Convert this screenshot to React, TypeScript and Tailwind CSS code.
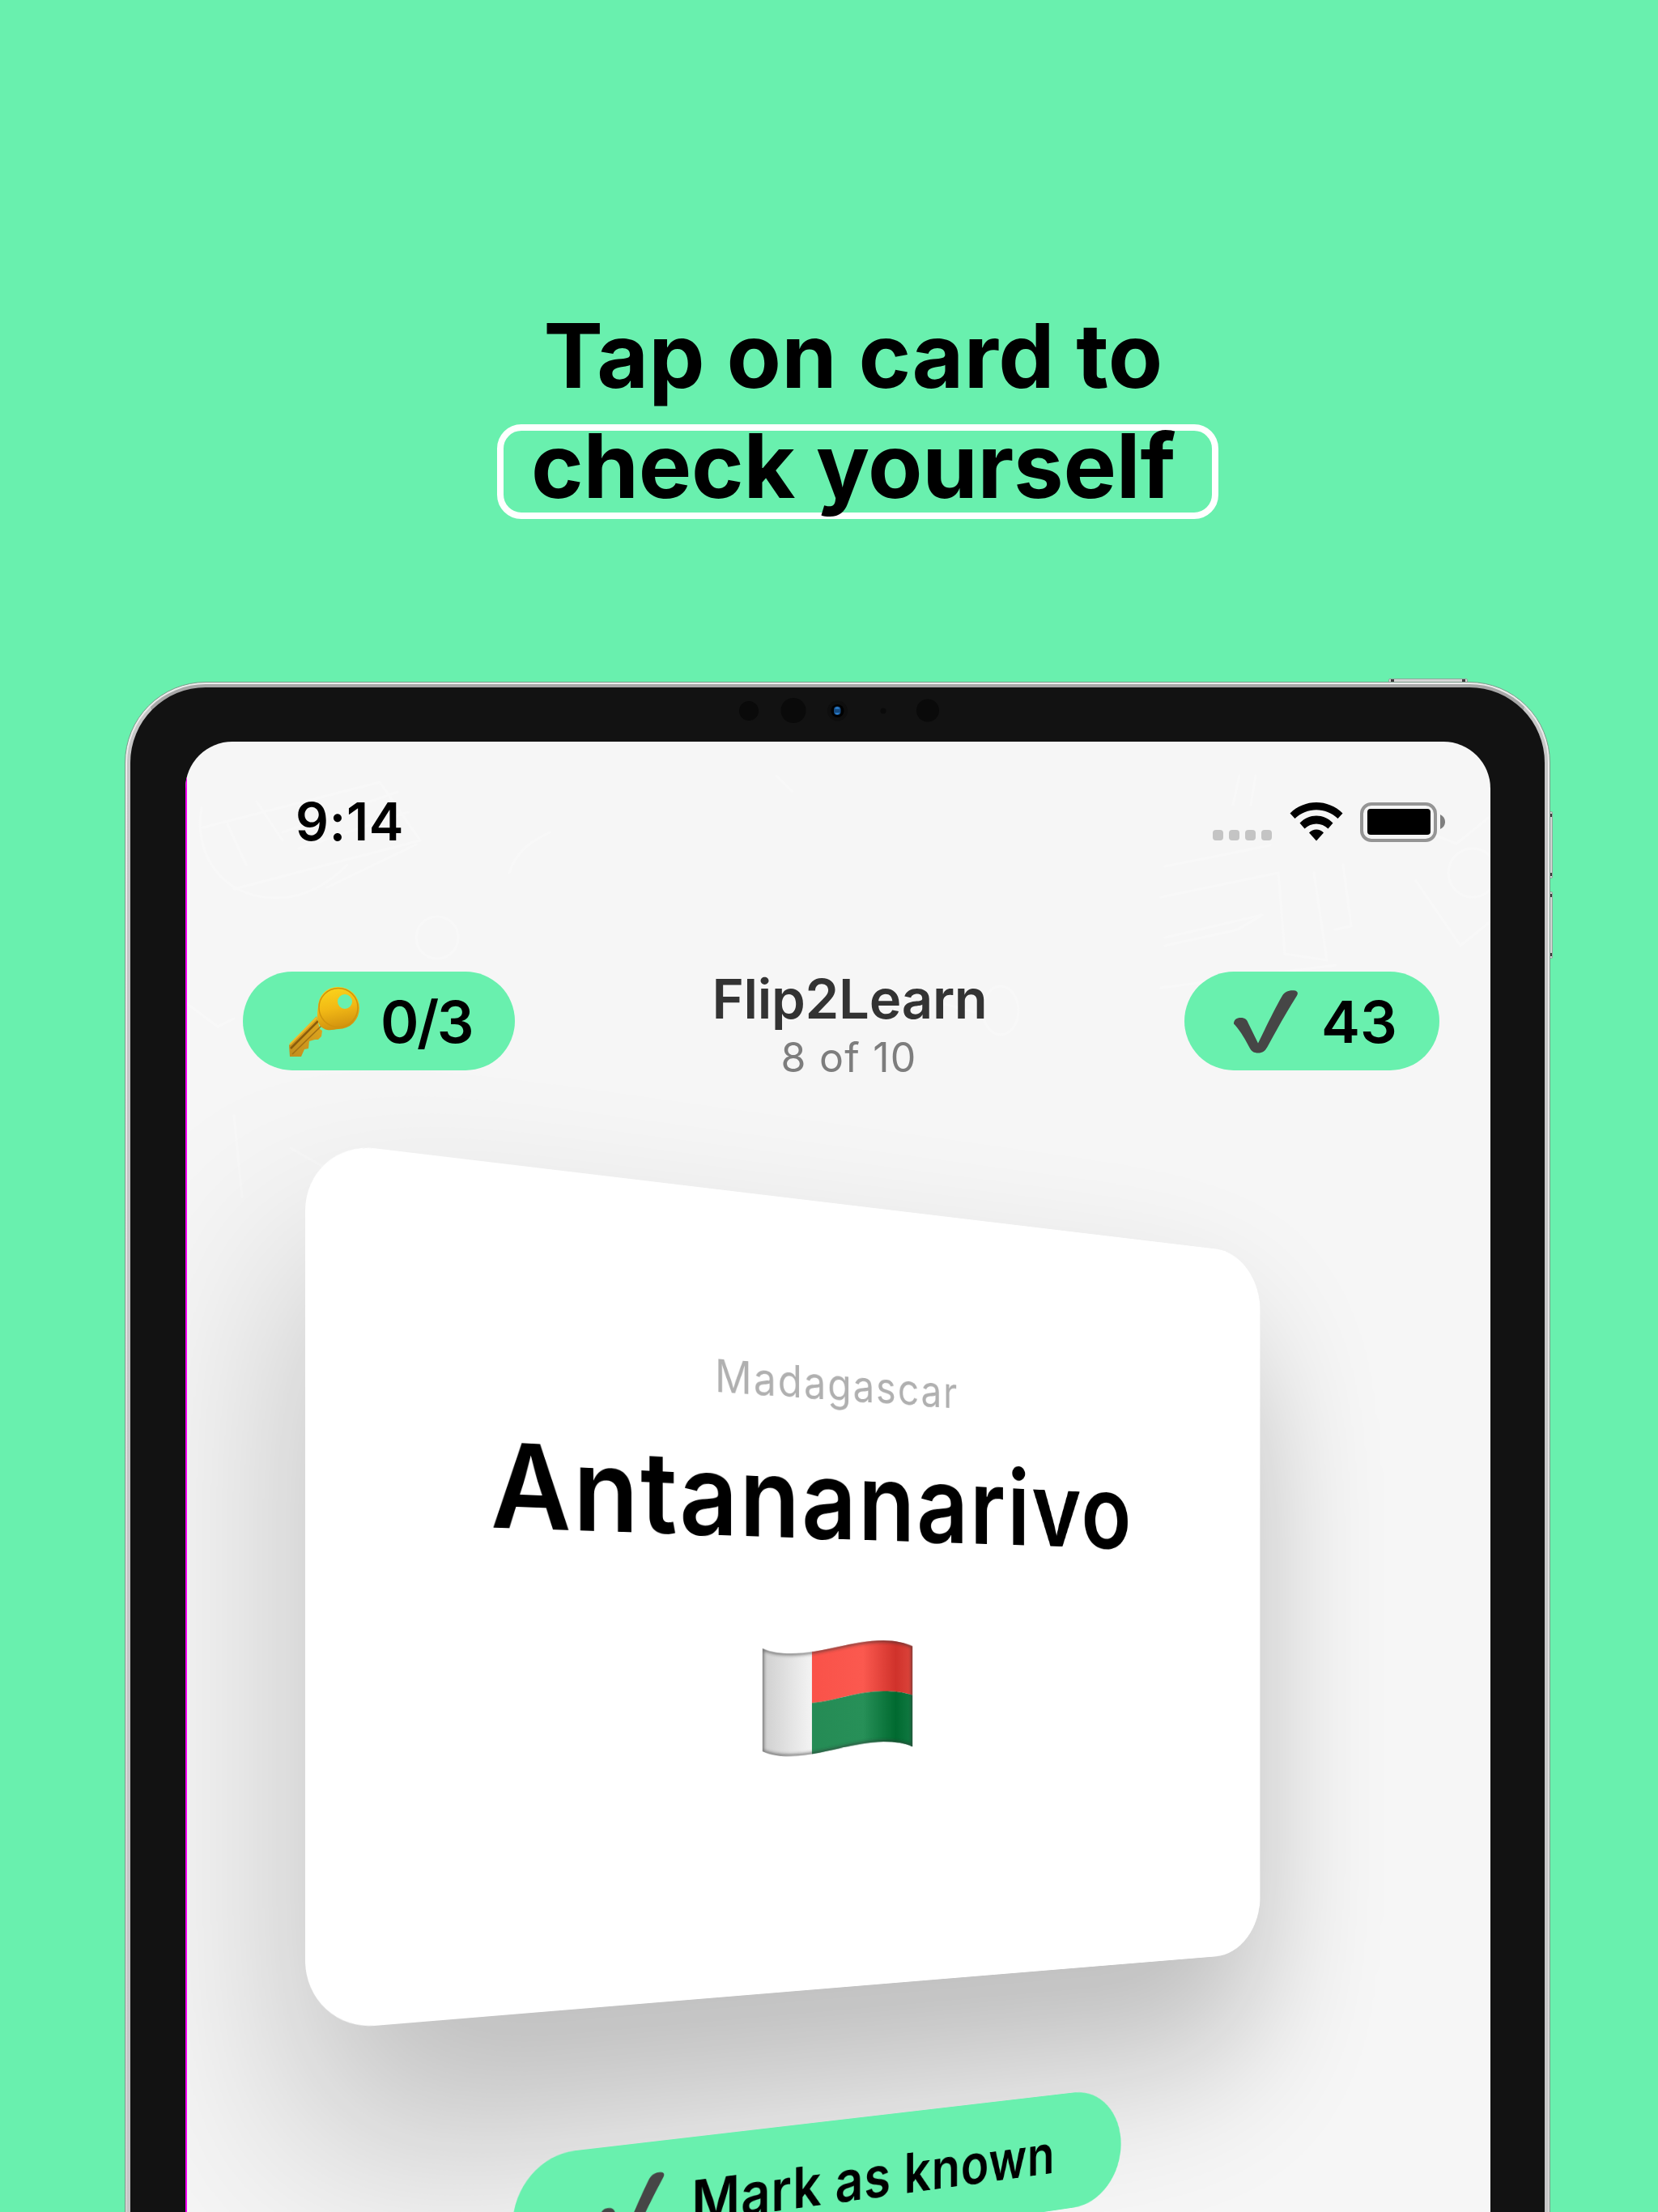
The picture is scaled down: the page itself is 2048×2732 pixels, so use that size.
import React from "react";

function CheckMark({ className }: { className: string }) {
  return (
    <svg viewBox="0 0 79 78" className={className} fill="#464646">
      <path d="M0 41.5C-.3 37 3 34 8.500 34c5.500 0 8 2.500 9.500 7l12 24.500C39 47 50 24 59.500 7.500 62.500 2 67.500-.2 74 .2c5 .3 6 3.300 3.800 6.800C65 27 53 49 41.500 70c-3 5.300-6 7.500-11.500 7.500-5 0-8.300-2-10.500-6.500C11 54.500 4 45.500 0 41.500Z" />
    </svg>
  );
}

function KeyIcon() {
  return (
    <svg viewBox="0 0 87 87" className="h-[87px] w-[87px]">
      <defs>
        <linearGradient id="keyGold" x1="0" y1="0" x2="0.2" y2="1">
          <stop offset="0" stopColor="#fbd81c" />
          <stop offset="0.55" stopColor="#f2b915" />
          <stop offset="1" stopColor="#d2930f" />
        </linearGradient>
        <linearGradient id="shaftGold" x1="1" y1="0" x2="0" y2="1">
          <stop offset="0" stopColor="#e0a81c" />
          <stop offset="1" stopColor="#c18d1f" />
        </linearGradient>
      </defs>
      <path d="M34 36 38 52 41 54 40 61 36 65 32 65 25 67 24 76 19 77 15 86 1 86 0 72Z" fill="url(#shaftGold)" />
      <path d="M36 42 2 76" stroke="#8a5d0c" strokeWidth="2.500" />
      <path d="M34 38 1 71" stroke="#efbd2a" strokeWidth="2" />
      <path d="M41 47 4 83" stroke="#a07014" strokeWidth="1.500" />
      <path fillRule="evenodd" d="M61 0a26 26 0 0 1 0 52c-4 0-9 2-14 1-8-2-12-8-12-16 0-4 0-8 1-13C37 10 46 0 61 0Zm8 9a9 9 0 1 0 0 18 9 9 0 0 0 0-18Z" fill="url(#keyGold)" />
      <circle cx="61" cy="25.500" r="24" fill="none" stroke="#cf930c" strokeWidth="1.500" />
    </svg>
  );
}

const flagOutline =
  "M0 13C14 19 28 20 43 20 95 20 140 1 192 1 212 1 228 4 240 9V152.500C228 148 212 145 192 145 140 145 95 162.500 43 162.500 28 162.500 14 161 0 155Z";

function Flag() {
  return (
    <svg viewBox="0 0 240 166" className="h-[166px] w-[240px]">
      <defs>
        <clipPath id="wave">
          <path d={flagOutline} />
        </clipPath>
        <linearGradient id="w" x1="0" x2="1">
          <stop offset="0" stopColor="#cfcfcf" />
          <stop offset="0.3" stopColor="#dadada" />
          <stop offset="1" stopColor="#f4f4f4" />
        </linearGradient>
        <linearGradient id="r" x1="0" x2="1">
          <stop offset="0" stopColor="#fa5249" />
          <stop offset="0.5" stopColor="#fb594f" />
          <stop offset="0.83" stopColor="#d0322b" />
          <stop offset="1" stopColor="#dc453c" />
        </linearGradient>
        <linearGradient id="g" x1="0" x2="1">
          <stop offset="0" stopColor="#258b55" />
          <stop offset="0.5" stopColor="#279058" />
          <stop offset="0.83" stopColor="#006a30" />
          <stop offset="1" stopColor="#127a43" />
        </linearGradient>
        <filter id="soft"><feGaussianBlur stdDeviation="2" /></filter>
      </defs>
      <g clipPath="url(#wave)">
        <rect width="78" height="166" fill="url(#w)" />
        <path d="M77 0H240V79C226 75 210 73 192 73 150 73 115 86 77 89Z" fill="url(#r)" />
        <path d="M77 89C115 86 150 73 192 73 210 73 226 75 240 79V166H77Z" fill="url(#g)" />
        <path d={flagOutline} fill="none" stroke="#333" strokeOpacity="0.6" strokeWidth="5" filter="url(#soft)" />
      </g>
    </svg>
  );
}

function Doodles() {
  return (
    <svg viewBox="0 0 1612 1816" className="absolute inset-0 h-full w-full" fill="none" stroke="#f8f8f8" strokeWidth="3" strokeLinejoin="round" strokeLinecap="round">
      <path d="M20 40C10 90 40 150 110 151 150 152 180 130 200 110M22 64 240 8 290 80 60 140M52 60 75 110M88 32 120 80M120 70 262 20M140 90 275 45M175 138 285 85" />
      <path d="M285 200a26 26 0 1 0 52 0 26 26 0 1 0-52 0M400 120C410 90 430 80 450 70M730 0l20 20M1302 0l-8 36M1322 0l-6 36" />
      <path d="M1210 112 1340 86M1205 150 1350 120 1358 220 1410 228 1394 120M1210 200 1330 172 1300 190 1210 210M1205 262 1420 234M1430 110 1440 186 1420 190" />
      <path d="M1612 50 1570 84 1545 74M1520 130 1575 210 1612 180M1560 120a30 30 0 1 0 60 0 30 30 0 1 0-60 0" />
      <path d="M0 280 40 310 60 300M330 290 350 270 390 280M985 290a22 30 0 1 0 44 0 22 30 0 1 0-44 0M930 280 975 292M60 420 70 520M130 460 200 500 240 560" />
    </svg>
  );
}

function StatusBar() {
  return (
    <div className="flex h-[160px] pl-[136px] pr-[56px] pt-[59px]">
      <div className="h-[80px] text-[64px] font-semibold leading-[80px] tracking-[0.012em]">9:14</div>
      <svg viewBox="0 0 287 50" className="ml-auto mt-[16px] h-[50px] w-[287px]">
        <g fill="#c4c4c4">
          <rect x="0" y="34" width="13" height="13" rx="4" />
          <rect x="20" y="34" width="13" height="13" rx="4" />
          <rect x="40" y="34" width="13" height="13" rx="4" />
          <rect x="60" y="34" width="13" height="13" rx="4" />
        </g>
        <g transform="translate(95.500 0)">
          <path d="M0 13.500C18-4.500 47-4.500 65 13.500L59 20C44 5.500 21 5.500 6 20Z" />
          <path d="M12 25.500C23.500 13.500 41.500 13.500 53 25.500L47 32.500C39 24.500 26 24.500 18 32.500Z" />
          <path d="M23.500 37.500C28.500 32 36.500 32 41.500 37.500L32.500 47.500Z" />
        </g>
        <rect x="184" y="2" width="91" height="45" rx="12" fill="none" stroke="#959595" strokeWidth="4" />
        <rect x="191" y="8" width="78" height="32" rx="4" />
        <path d="M281 15C285 17 287 20 287 24S285 31 281 33Z" fill="#7f7f7f" />
      </svg>
    </div>
  );
}

function Toolbar() {
  return (
    <div className="mt-[124px] flex h-[122px] justify-between pl-[71px] pr-[63px]">
      <div className="flex h-[122px] w-[336px] rounded-full bg-[#69f0ae] pl-[57px] pt-[19px]">
        <KeyIcon />
        <div className="ml-[26px] text-[72px] font-[560] leading-[86px] tracking-[-0.035em]">0/3</div>
      </div>
      <div className="flex flex-col items-center">
        <div className="h-[84px] text-[67px] font-semibold leading-[68px] tracking-[-0.004em] text-[#333]">Flip2Learn</div>
        <div className="mr-[2px] h-[38px] text-[50px] leading-[45px] tracking-[0.025em] text-[#7d7d7d]">8 of 10</div>
      </div>
      <div className="flex h-[122px] w-[315px] rounded-full bg-[#69f0ae] pl-[61px] pt-[23px]">
        <CheckMark className="h-[78px] w-[79px]" />
        <div className="ml-[29px] text-[72px] font-[560] leading-[78px]">43</div>
      </div>
    </div>
  );
}

function FlipCard() {
  return (
    <div className="ml-[147.500px] mt-[86px] w-[1505px] origin-[0px_652px] [transform:matrix3d(1,0,0,0.0001834,0,1,0,0,0,0,1,0,0,0,0,1)]">
      <div className="flex h-[1101px] flex-col items-center rounded-[88px] bg-white pt-[222px] shadow-[0_145px_265px_rgba(0,0,0,0.24)]">
        <div className="h-[64px] text-[62px] leading-[64px] tracking-[0.042em] text-[#b0b0b0]">Madagascar</div>
        <div className="mr-[8px] mt-[55px] h-[150px] text-[152px] font-semibold leading-[150px] tracking-[0.018em]">Antananarivo</div>
        <div className="mr-[6px] mt-[121px]"><Flag /></div>
      </div>
      <div className="mx-auto mt-[186px] flex h-[172px] w-[967px] rounded-full bg-[#69f0ae] pl-[122px] pt-[42px]">
        <CheckMark className="h-[90px] w-[92px]" />
        <div className="ml-[40px] whitespace-nowrap text-[79px] font-semibold leading-[90px] tracking-[0.013em]">Mark as known</div>
      </div>
    </div>
  );
}

function Camera() {
  return (
    <svg viewBox="0 0 260 34" className="absolute left-[905px] top-[860px] h-[34px] w-[260px]">
      <g fill="#0a0a0a">
        <circle cx="20" cy="18" r="12" />
        <circle cx="75" cy="17.500" r="15.500" />
        <circle cx="129.500" cy="18" r="12.500" fill="#0e0e0e" />
        <circle cx="129.500" cy="18" r="8" fill="#000" />
        <circle cx="186" cy="18" r="3.500" />
        <circle cx="241" cy="17.500" r="14" />
      </g>
      <rect x="125" y="12.500" width="8.500" height="10.500" rx="4" fill="#154a80" />
      <path d="M126 15.500Q129 11 132.500 15.500M126 20.500Q129 24.500 132.500 20.500" fill="#2f86d8" />
    </svg>
  );
}

function SideButton({ className }: { className: string }) {
  return (
    <div className={"absolute flex items-center justify-between rounded-[2px] border border-[#8fa89c] bg-[#d4d4d4] p-[2px] " + className}>
      <span className="h-[4px] w-[4px] shrink-0 bg-[#3c3c3c]" />
      <span className="h-[4px] w-[4px] shrink-0 bg-[#3c3c3c]" />
    </div>
  );
}

export default function App() {
  return (
    <div className="relative h-[2732px] w-[2048px] overflow-hidden bg-[#69f0ae] font-['Inter',sans-serif] text-black">
      <div className="flex h-[842px] flex-col items-center pl-[60px] pt-[371px]">
        <h1 className="flex flex-col items-center whitespace-nowrap text-[110px] font-bold leading-[136px]">
          <span className="tracking-[0.003em]">Tap on card to</span>
          <span className="relative flex w-[891px] justify-center">
            <span className="absolute left-[5px] top-[17px] h-[117px] w-[891px] rounded-[30px] border-8 border-white" />
            <span className="relative tracking-[-0.002em]">check yourself</span>
          </span>
        </h1>
      </div>

      <SideButton className="left-[1715px] top-[838px] h-[6px] w-[98px]" />
      <SideButton className="left-[1912px] top-[1002px] h-[83px] w-[6px] flex-col" />
      <SideButton className="left-[1912px] top-[1101px] h-[83px] w-[6px] flex-col" />

      <div className="relative ml-[154px] h-[2100px] w-[1761px] rounded-t-[100px] border border-[#7d9c8c] bg-gradient-to-b from-[#ededed] to-[#cfcfcf] p-[2px]">
        <div className="h-full rounded-t-[97px] border-4 border-b-0 border-x-[#c6c6c6] border-t-[#a8a8a8] bg-[#121212] px-[68px] pt-[67px]">
          <div className="relative h-[1900px] w-[1612px] overflow-hidden rounded-t-[58px] bg-[#f6f6f6]">
            <Doodles />
            <div className="absolute left-0 top-[44px] h-full w-[2px] bg-[#ff00ff]" />
            <div className="relative">
              <StatusBar />
              <Toolbar />
              <FlipCard />
            </div>
          </div>
        </div>
      </div>
      <Camera />
    </div>
  );
}
